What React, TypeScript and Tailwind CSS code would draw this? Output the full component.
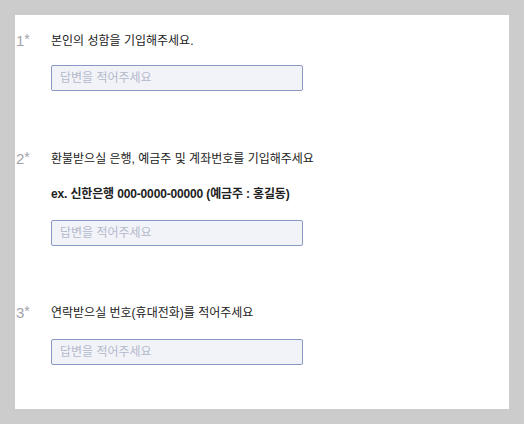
export default function App() {
  const font = { fontFamily: '"Liberation Sans", "Noto Sans CJK KR", sans-serif' };
  const Input = () => (
    <input
      placeholder="답변을 적어주세요"
      className="block w-[252px] h-[26px] rounded-[2px] border border-[#8a98c6] bg-[#f2f3f8] pl-[8px] text-[12px] text-[#333] placeholder:text-[#b3bacb] outline-none"
      style={font}
    />
  );
  const Num = ({ n }: { n: number }) => (
    <div className="w-[36px] pl-[1px] text-[15px] leading-[16px] text-[#a3a3ab]">
      {n}
      <span className="text-[14px] relative top-[-2px]">*</span>
    </div>
  );
  return (
    <div className="w-[524px] h-[424px] bg-[#cccccc] p-[15px]" style={font}>
      <div className="w-[494px] h-[394px] bg-white pt-[18px]">
        <div className="flex">
          <Num n={1} />
          <div>
            <div className="text-[12px] leading-[16px] text-[#222]">본인의 성함을 기입해주세요.</div>
            <div className="mt-[16px]"><Input /></div>
          </div>
        </div>
        <div className="flex mt-[60px]">
          <Num n={2} />
          <div>
            <div className="text-[12px] leading-[16px] text-[#222]">환불받으실 은행, 예금주 및 계좌번호를 기입해주세요</div>
            <div className="mt-[19px] text-[12px] leading-[16px] font-bold tracking-[-0.15px] text-[#222]">ex. 신한은행 000-0000-00000 (예금주 : 홍길동)</div>
            <div className="mt-[18px]"><Input /></div>
          </div>
        </div>
        <div className="flex mt-[59px]">
          <Num n={3} />
          <div>
            <div className="text-[12px] leading-[16px] text-[#222]">연락받으실 번호(휴대전화)를 적어주세요</div>
            <div className="mt-[18px]"><Input /></div>
          </div>
        </div>
      </div>
    </div>
  );
}
